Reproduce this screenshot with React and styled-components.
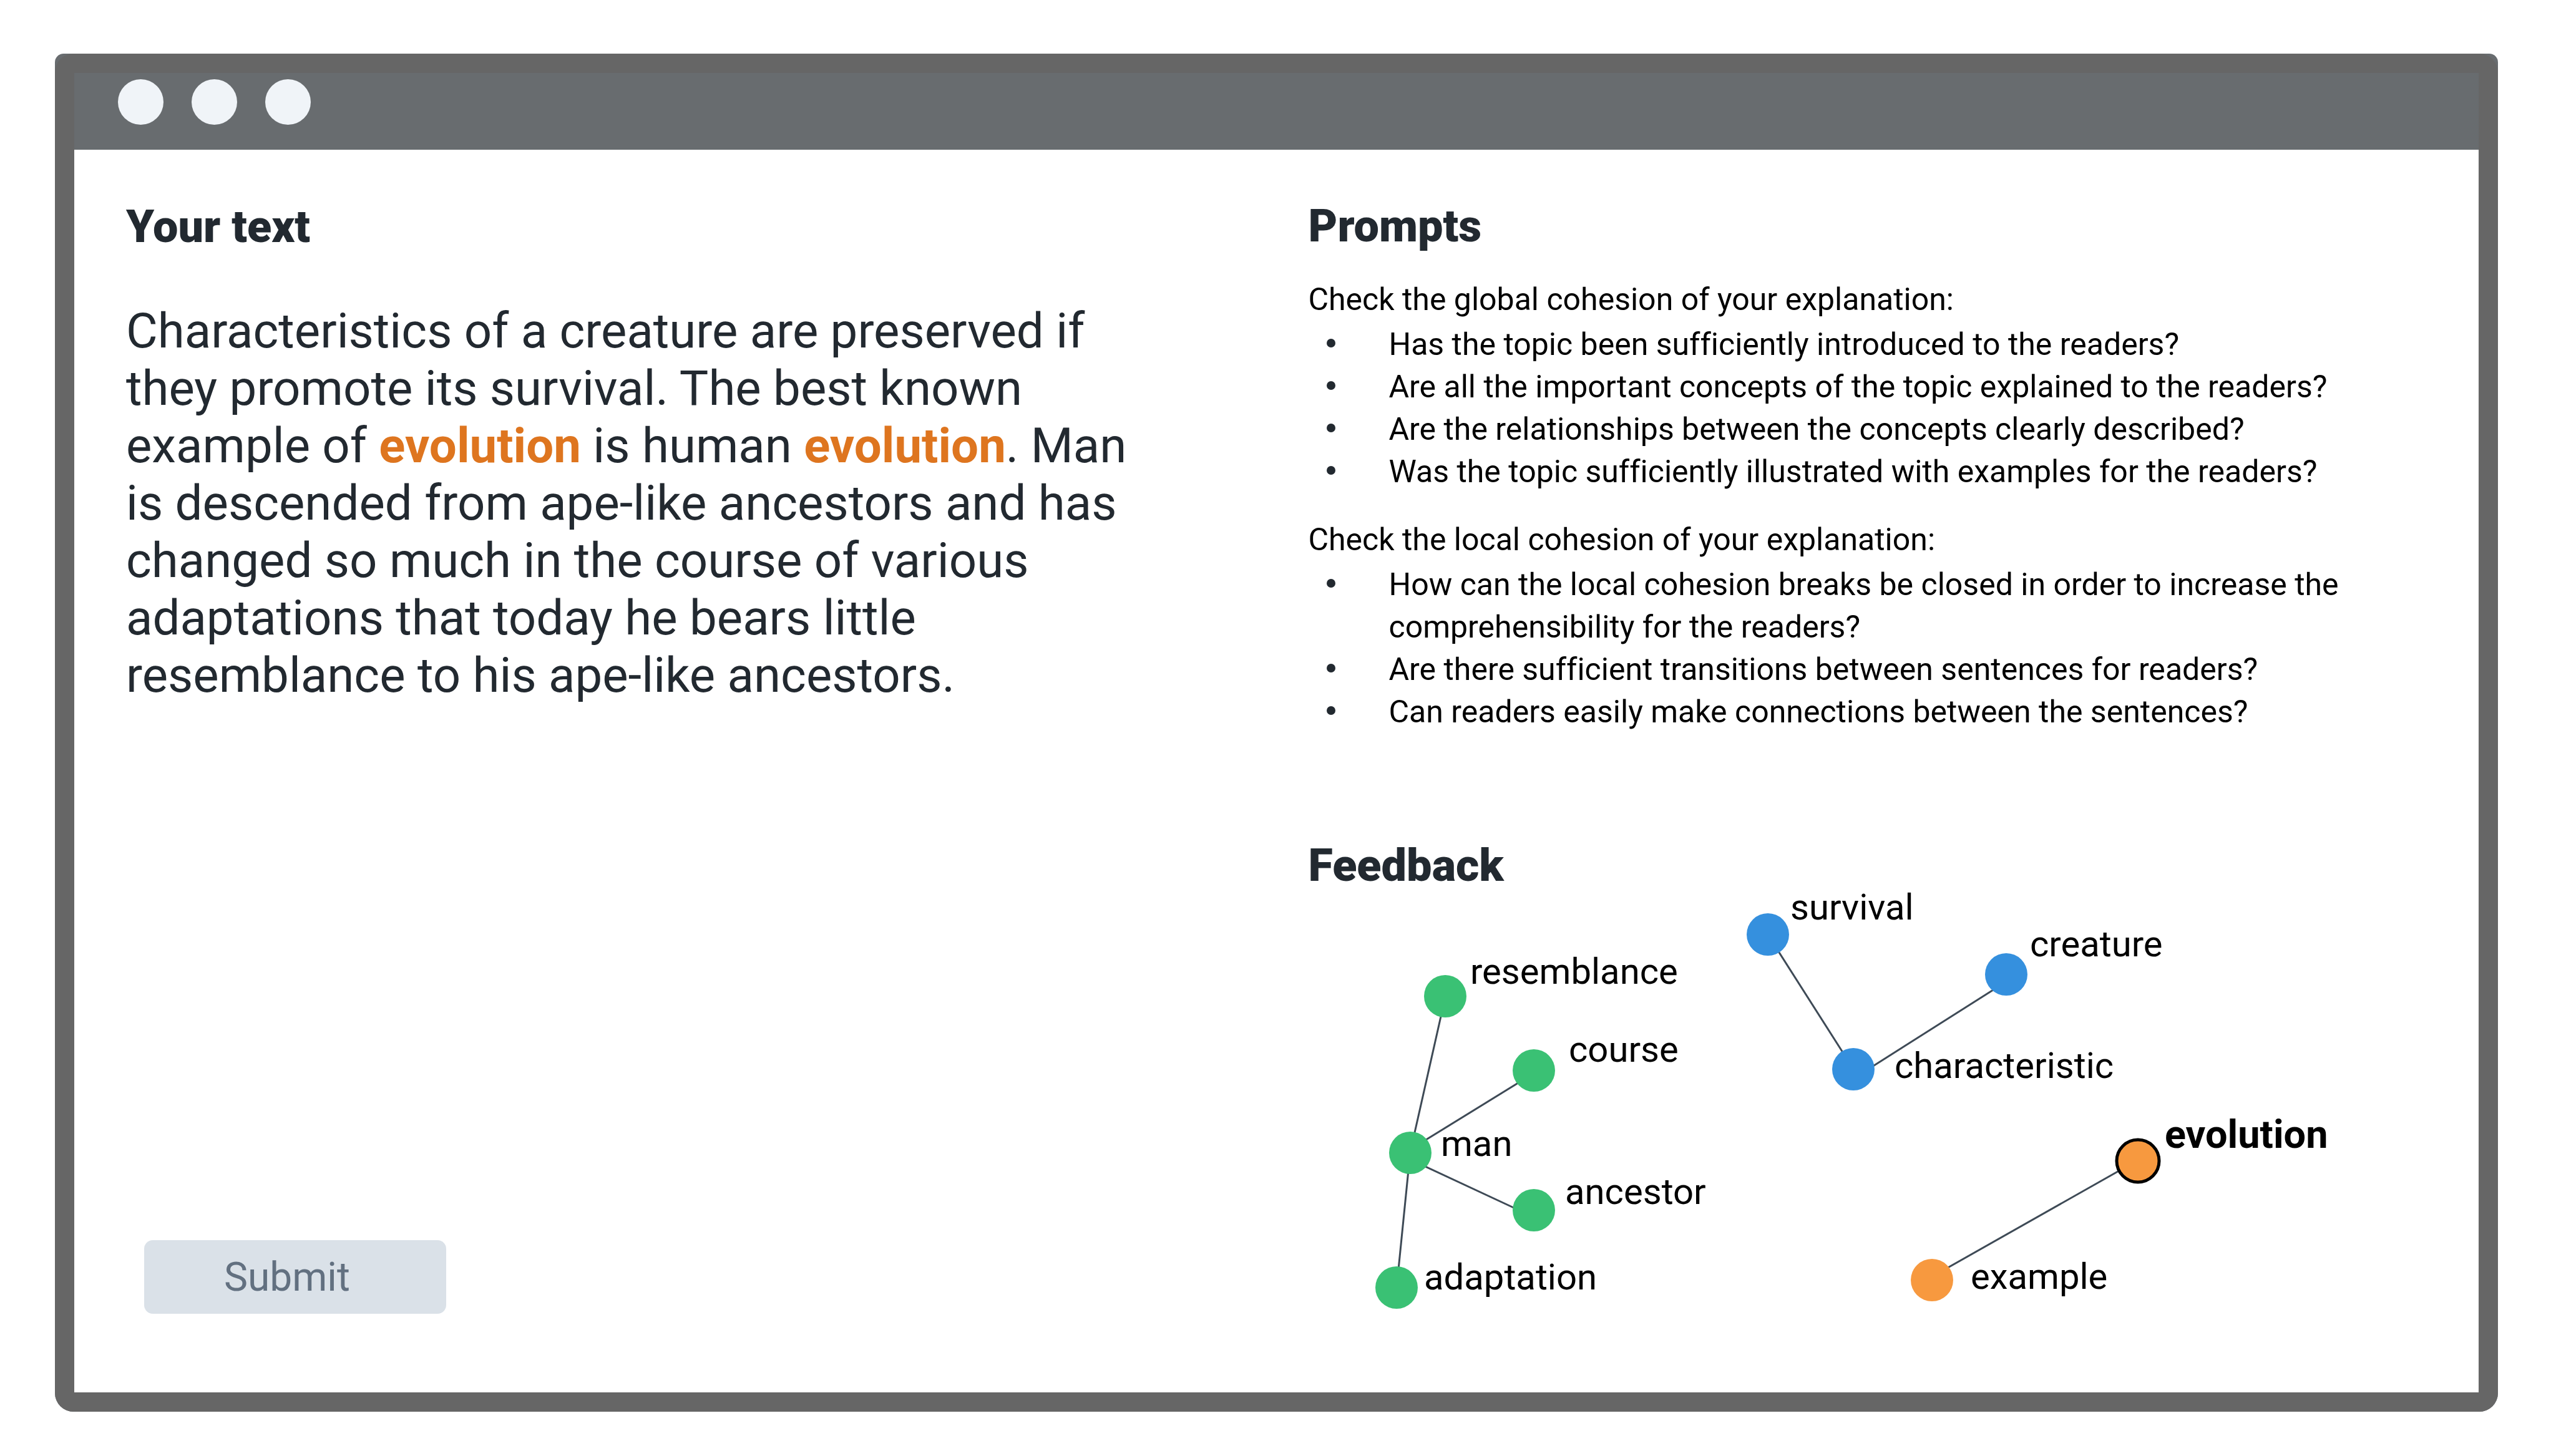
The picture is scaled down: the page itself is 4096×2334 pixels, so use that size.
import React from "react";
import styled, { createGlobalStyle } from "styled-components";

const GlobalStyle = createGlobalStyle`
  *, *::before { box-sizing: border-box; }
  body {
    margin: 0;
    background: #ffffff;
    color: #000000;
    font-family: Roboto, "Liberation Sans", sans-serif;
    font-variant-ligatures: none;
  }
`;

const Page = styled.main`
  display: flex;
  min-height: 100vh;
  padding: 86px 93px 71px 88px;
`;

const Shell = styled.div`
  display: flex;
  flex: 1;
  border-radius: 14px 14px 30px 30px;
  background: #686c6f;
`;

const Frame = styled.div`
  display: flex;
  flex: 1;
  flex-direction: column;
  border: 31px solid #666666;
  border-radius: 30px;
`;

const TitleBar = styled.header`
  display: flex;
  align-items: flex-start;
  gap: 45px;
  height: 123px;
  padding: 10px 70px;
  background: #686c6f;
`;

const WindowDot = styled.span`
  width: 73px;
  height: 73px;
  border-radius: 50%;
  background: #f0f4f8;
`;

const Content = styled.div`
  display: grid;
  flex: 1;
  grid-template-columns: 1fr 1fr;
  background: #ffffff;
`;

const Panel = styled.section`
  display: flex;
  flex-direction: column;
  align-items: flex-start;
  padding: ${(p) => p.$padding};
`;

const Heading = styled.h2`
  margin: 0;
  color: #222930;
  font-size: 72px;
  font-weight: 900;
  line-height: 84px;
`;

const Essay = styled.p`
  margin: 79px 0 0;
  color: #222930;
  font-size: 78px;
  line-height: 92px;
`;

const Highlight = styled.strong`
  color: #de751f;
  font-weight: 700;
`;

const SubmitButton = styled.button`
  width: 484px;
  height: 118px;
  margin: auto 0 0 29px;
  padding: 2px 0 0 128px;
  border: 0;
  border-radius: 14px;
  background: #dae1e8;
  color: #627080;
  font: 400 64px/76px Roboto, "Liberation Sans", sans-serif;
  text-align: left;
`;

const PromptGroup = styled.div`
  margin-top: 41px;
  font-size: 50px;
  line-height: 68px;
`;

const PromptIntro = styled.p`
  margin: 0 0 4px;
`;

const PromptList = styled.ul`
  margin: 0;
  padding: 0 0 0 29px;
  list-style: none;
`;

const PromptItem = styled.li`
  display: grid;
  grid-template-columns: 100px 1fr;

  &::before {
    content: "";
    width: 14px;
    height: 14px;
    margin-top: 25px;
    border-radius: 50%;
    background: #222930;
  }
`;

const Feedback = styled.div`
  width: 100%;
  margin-top: 171px;
`;

const Graph = styled.svg`
  display: block;
  width: 1740px;
  max-width: 100%;
  height: auto;
  overflow: visible;
`;

const Edge = styled.line`
  stroke: #3e4a56;
  stroke-width: 3px;
`;

const Node = styled.circle`
  fill: ${(p) => p.$color};
  stroke: #000000;
  stroke-width: ${(p) => (p.$active ? "5px" : "0")};
`;

const NodeLabel = styled.text`
  fill: #000000;
  font-size: ${(p) => (p.$active ? "63px" : "58px")};
  font-weight: ${(p) => (p.$active ? 700 : 400)};
`;

const GREEN = "#3ac174";
const BLUE = "#3590de";
const ORANGE = "#f7993f";

const promptGroups = [
  {
    intro: "Check the global cohesion of your explanation:",
    items: [
      "Has the topic been sufficiently introduced to the readers?",
      "Are all the important concepts of the topic explained to the readers?",
      "Are the relationships between the concepts clearly described?",
      "Was the topic sufficiently illustrated with examples for the readers?",
    ],
  },
  {
    intro: "Check the local cohesion of your explanation:",
    items: [
      "How can the local cohesion breaks be closed in order to increase the comprehensibility for the readers?",
      "Are there sufficient transitions between sentences for readers?",
      "Can readers easily make connections between the sentences?",
    ],
  },
];

const edges = [
  [213, 195, 169, 390],
  [339, 304, 185, 399],
  [183, 438, 333, 508],
  [160, 446, 144, 605],
  [751, 92, 858, 260],
  [1100, 155, 903, 280],
  [1302, 445, 1021, 604],
];

const nodes = [
  { name: "resemblance", color: GREEN, x: 219, y: 167, lx: 259, ly: 147 },
  { name: "course", color: GREEN, x: 361, y: 286, lx: 417, ly: 272 },
  { name: "man", color: GREEN, x: 163, y: 418, lx: 212, ly: 423 },
  { name: "ancestor", color: GREEN, x: 361, y: 510, lx: 411, ly: 500 },
  { name: "adaptation", color: GREEN, x: 141, y: 634, lx: 185, ly: 637 },
  { name: "survival", color: BLUE, x: 736, y: 68, lx: 772, ly: 44 },
  { name: "creature", color: BLUE, x: 1118, y: 132, lx: 1156, ly: 103 },
  { name: "characteristic", color: BLUE, x: 873, y: 284, lx: 939, ly: 298 },
  { name: "evolution", color: ORANGE, x: 1329, y: 431, lx: 1372, ly: 410, active: true },
  { name: "example", color: ORANGE, x: 999, y: 622, lx: 1061, ly: 636 },
];

function ConceptMap() {
  return (
    <Graph viewBox="0 0 1740 680" role="img" aria-label="Concept map">
      {edges.map(([x1, y1, x2, y2]) => (
        <Edge key={`${x1}-${y1}`} x1={x1} y1={y1} x2={x2} y2={y2} />
      ))}
      {nodes.map((n) => (
        <g key={n.name}>
          <Node cx={n.x} cy={n.y} r={34} $color={n.color} $active={n.active} />
          <NodeLabel x={n.lx} y={n.ly} $active={n.active}>
            {n.name}
          </NodeLabel>
        </g>
      ))}
    </Graph>
  );
}

export default function App() {
  return (
    <Page>
      <GlobalStyle />
      <Shell>
        <Frame>
          <TitleBar>
            <WindowDot />
            <WindowDot />
            <WindowDot />
          </TitleBar>
          <Content>
            <Panel $padding="82px 200px 126px 83px">
              <Heading>Your text</Heading>
              <Essay>
                Characteristics of a creature are preserved if they promote its
                survival. The best known example of <Highlight>evolution</Highlight> is
                human <Highlight>evolution</Highlight>. Man is descended from ape-like
                ancestors and has changed so much in the course of various adaptations
                that today he bears little resemblance to his ape-like ancestors.
              </Essay>
              <SubmitButton type="button">Submit</SubmitButton>
            </Panel>
            <Panel $padding="81px 0 100px 51px">
              <Heading>Prompts</Heading>
              {promptGroups.map((group) => (
                <PromptGroup key={group.intro}>
                  <PromptIntro>{group.intro}</PromptIntro>
                  <PromptList>
                    {group.items.map((item) => (
                      <PromptItem key={item}>{item}</PromptItem>
                    ))}
                  </PromptList>
                </PromptGroup>
              ))}
              <Feedback>
                <Heading>Feedback</Heading>
                <ConceptMap />
              </Feedback>
            </Panel>
          </Content>
        </Frame>
      </Shell>
    </Page>
  );
}
